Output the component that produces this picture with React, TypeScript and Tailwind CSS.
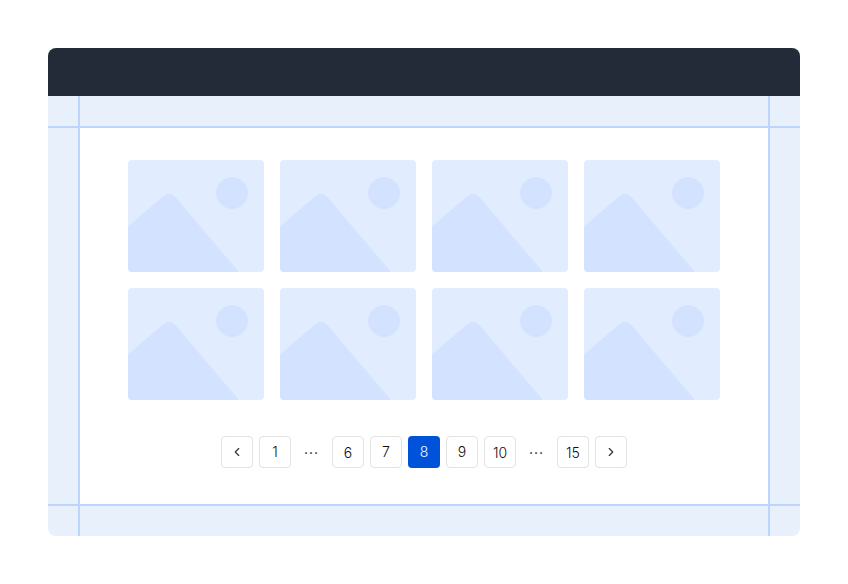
import { ChevronLeft, ChevronRight } from "lucide-react";

const pages: (number | "...")[] = [1, "...", 6, 7, 8, 9, 10, "...", 15];
// these labels sit a pixel lower in the design
const lowered = [6, 10, 15];

function Placeholder() {
  return (
    <div className="h-[112px] w-[136px] overflow-hidden rounded bg-[#e2ecff]">
      <svg width="136" height="112" viewBox="0 0 136 112" className="block">
        <circle cx="104" cy="33" r="16" fill="#d3e3ff" />
        <path d="M0 66.5 L35.5 36 Q42 31 47.5 37 L111 112 H0 Z" fill="#d3e3ff" />
      </svg>
    </div>
  );
}

function PageButton({ children, active, low }: { children: React.ReactNode; active?: boolean; low?: boolean }) {
  return (
    <button
      className={
        "flex h-8 w-8 items-center justify-center rounded text-sm font-light " +
        (active ? "bg-[#0052d9] text-white " : "border border-[#e3e3e3] bg-white text-[#111] ") +
        (low ? "pt-[2px]" : "")
      }
    >
      {children}
    </button>
  );
}

function BandRow() {
  return (
    <div className="flex h-[30px]">
      <div className="w-[30px] bg-[#e8f0fc]" />
      <div className="w-[2px] bg-[#bbd5fc]" />
      <div className="flex-1 bg-[#e8f0fc]" />
      <div className="w-[2px] bg-[#bbd5fc]" />
      <div className="w-[30px] bg-[#e8f0fc]" />
    </div>
  );
}

export default function App() {
  return (
    <div className="h-[584px] w-[848px] bg-white p-12 font-['Inter',sans-serif]">
      <div className="w-[752px] overflow-hidden rounded-lg">
        <div className="h-12 bg-[#242b38]" />
        <BandRow />
        <div className="h-[2px] bg-[#bbd5fc]" />
        <div className="flex h-[376px]">
          <div className="w-[30px] bg-[#e8f0fc]" />
          <div className="w-[2px] bg-[#bbd5fc]" />
          <div className="flex flex-1 flex-col items-center bg-white pt-8">
            <div className="grid grid-cols-4 gap-4">
              {Array.from({ length: 8 }).map((_, i) => (
                <Placeholder key={i} />
              ))}
            </div>
            <div className="mt-9 flex items-center gap-1.5">
              <PageButton>
                <ChevronLeft size={14} strokeWidth={2} color="#333" />
              </PageButton>
              {pages.map((p, i) =>
                p === "..." ? (
                  <span key={i} className="w-[29px] pt-[2px] text-center text-sm leading-none tracking-[1px] text-[#222]">
                    ···
                  </span>
                ) : (
                  <PageButton key={i} active={p === 8} low={lowered.includes(p)}>
                    {p}
                  </PageButton>
                ),
              )}
              <PageButton>
                <ChevronRight size={14} strokeWidth={2} color="#333" />
              </PageButton>
            </div>
          </div>
          <div className="w-[2px] bg-[#bbd5fc]" />
          <div className="w-[30px] bg-[#e8f0fc]" />
        </div>
        <div className="h-[2px] bg-[#bbd5fc]" />
        <BandRow />
      </div>
    </div>
  );
}
